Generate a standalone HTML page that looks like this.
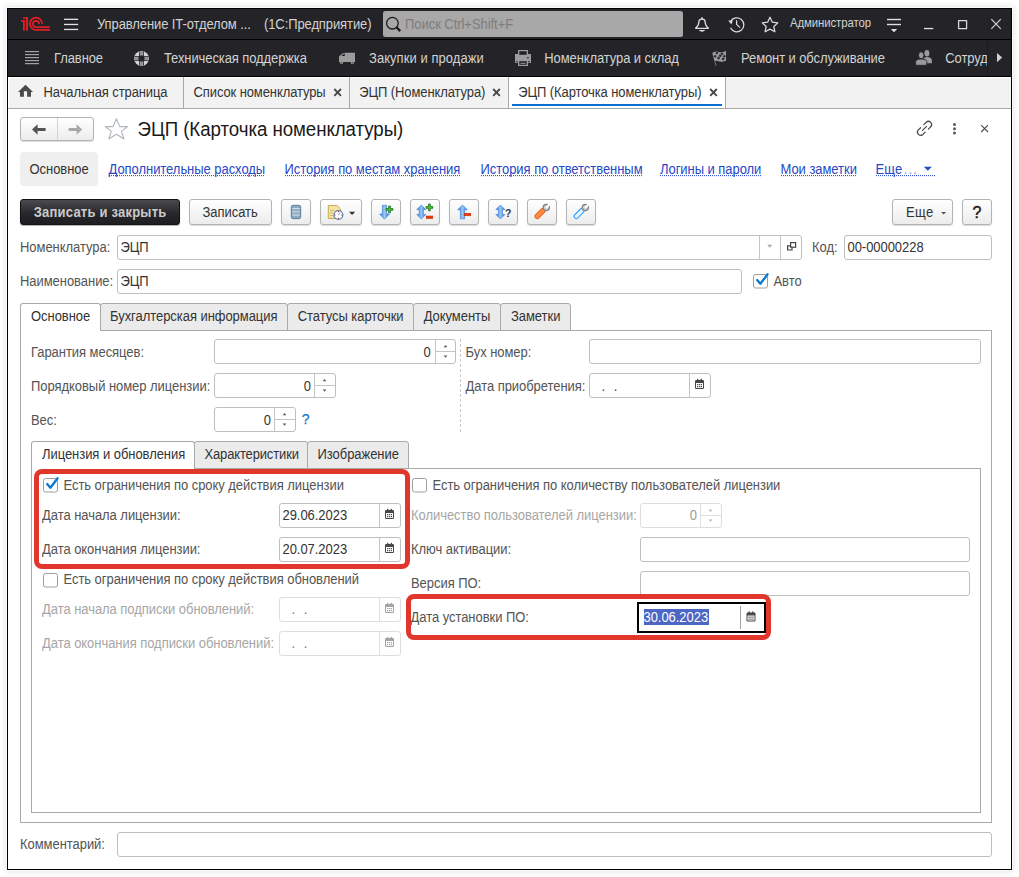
<!DOCTYPE html>
<html><head><meta charset="utf-8">
<style>
*{box-sizing:border-box;margin:0;padding:0}
html,body{width:1019px;height:877px;overflow:hidden;background:#fff}
body{position:relative;font-family:"Liberation Sans",sans-serif;font-size:13px;color:#333}
.a{position:absolute}
.t{position:absolute;white-space:nowrap;font-size:13px;line-height:15px;letter-spacing:-0.05px}
.wt,.tb{letter-spacing:-0.1px}
.t{transform:scaleY(1.07);transform-origin:0 12px}
svg{position:absolute;overflow:visible}
#win{position:absolute;left:7px;top:8px;width:1005px;height:862px;border:1px solid #000;background:#fff;box-shadow:0 0 0 1px #fafafa,0 0 6px 2px rgba(0,0,0,.10)}
#title{left:8px;top:9px;width:1003px;height:30px;background:#242428}
#sep1{left:8px;top:39px;width:1003px;height:1px;background:#000}
#sect{left:8px;top:40px;width:1003px;height:36px;background:#242428}
#sep2{left:8px;top:76px;width:1003px;height:1px;background:#000}
#tabs{left:8px;top:77px;width:1003px;height:31px;background:#f2f2f2;border-top:1px solid #fff;border-left:1px solid #fff}
#tabline{left:8px;top:108px;width:1003px;height:1px;background:#a8a8a8}
.wt{color:#d2d2d2}
.lnk{color:#2548c6;background-image:linear-gradient(to right,#2548c6 50%,transparent 50%);background-size:2px 1px;background-repeat:repeat-x;background-position:0 13px;padding-bottom:1px}
.inp{position:absolute;border:1px solid #bfbfbf;border-radius:3px;background:#fff}
.dis{border-color:#dedede}
.lbl{color:#545454}
.dl{color:#a6a6a6}
.btn{position:absolute;border:1px solid #b3b3b3;border-radius:3px;background:linear-gradient(#fff,#ececec);box-shadow:0 1px 1px rgba(0,0,0,.15)}
.vsep{position:absolute;width:1px;background:#c4c4c4}
.cb{position:absolute;width:15px;height:15px;border:1px solid #9a9a9a;border-radius:2px;background:#fff}
.red{position:absolute;border:5px solid #e0362c;border-radius:8px}
</style></head><body>
<div id="win"></div>
<div class="a" id="title"></div>
<div class="a" id="sep1"></div>
<div class="a" id="sect"></div>
<div class="a" id="sep2"></div>
<div class="a" id="tabs"></div>
<div class="a" id="tabline"></div>

<!-- TITLEBAR -->
<!-- 1C logo -->
<svg style="left:18px;top:14px" width="34" height="19" viewBox="18 14 34 19">
 <g fill="#e21d25">
  <rect x="21" y="20.2" width="3.8" height="1.6"/>
  <rect x="23" y="20.2" width="1.8" height="10.5"/>
  <rect x="23" y="17.2" width="4.8" height="1.6"/>
  <rect x="26.1" y="17.2" width="1.9" height="13.5"/>
 </g>
 <g fill="none" stroke="#e21d25" stroke-width="1.75">
  <path d="M50 29.85 H36 A6.1 6.1 0 1 1 42.1 23.75"/>
  <path d="M50 27 H36 A3.1 3.1 0 1 1 39.1 23.9"/>
 </g>
</svg>

<!-- hamburger -->
<svg style="left:0;top:0" width="1019" height="40" viewBox="0 0 1019 40">
 <g fill="#e4e4e4">
  <rect x="64" y="18.7" width="14.2" height="1.3"/>
  <rect x="64" y="23.8" width="14.2" height="1.3"/>
  <rect x="64" y="28.8" width="14.2" height="1.3"/>
 </g>
 <rect x="383" y="11" width="300" height="26" rx="2.5" fill="#a8a8a8"/>
 <g fill="none" stroke="#1c1c1c">
  <circle cx="392.4" cy="23.2" r="5.8" stroke-width="1.3"/>
  <path d="M396.6 27.4 L400.3 31.1" stroke-width="2.2"/>
 </g>
 <g fill="none" stroke="#dcdcdc" stroke-width="1.25" stroke-linejoin="round">
  <path d="M695.6 28.3 Q698.9 25.4 698.9 21.8 Q698.9 19.2 702 19.2 Q705.1 19.2 705.1 21.8 Q705.1 25.4 708.4 28.3 Z"/>
  
  <path d="M730.6 21.6 A7 7 0 1 1 730.5 27.8"/>
  <path d="M736.6 20.2 V24.4 L740 27.6"/>
  <polygon points="770.00,17.20 772.35,22.24 777.80,22.85 773.80,26.50 774.90,31.80 770.00,29.10 765.10,31.80 766.20,26.50 762.20,22.85 767.65,22.24"/>
  <rect x="958.6" y="20.6" width="8" height="8"/>
  <path d="M991.3 19.2 L1000.8 28.8 M1000.8 19.2 L991.3 28.8" stroke-width="1.1"/>
 </g>
 <polygon points="728.2,20.6 732.8,20.4 731.4,24.6" fill="#dcdcdc"/>
 <circle cx="702" cy="18.3" r="1" fill="#dcdcdc"/><path d="M698.6 30.1 H705.4 Q702 33.2 698.6 30.1 Z" fill="#dcdcdc"/>
 <g fill="#e0e0e0">
  <rect x="887" y="18.8" width="14" height="1.4"/>
  <rect x="887" y="23.8" width="14" height="1.4"/>
  <polygon points="890.8,29 897.2,29 894,32.2"/>
  <rect x="924" y="27.9" width="9.2" height="1.3"/>
 </g>
</svg>
<div class="t wt" style="left:97px;top:17px">Управление IT-отделом ...</div>
<div class="t wt" style="left:264px;top:17px">(1С:Предприятие)</div>
<div class="t" style="left:405px;top:17px;color:#7d7d7d">Поиск Ctrl+Shift+F</div>
<div class="t wt" style="left:790px;top:17.3px;font-size:11.4px;line-height:13px">Администратор</div>

<!-- SECTION BAR -->
<svg style="left:0;top:40px" width="1019" height="36" viewBox="0 40 1019 36">
 <g fill="#a3a3a3">
  <rect x="25" y="51" width="14" height="1.2"/>
  <rect x="25" y="54" width="14" height="1.2"/>
  <rect x="25" y="57" width="14" height="1.2"/>
  <rect x="25" y="60" width="14" height="1.2"/>
  <rect x="25" y="63" width="14" height="1.2"/>
 </g>
 <!-- lifebuoy -->
 <clipPath id="lb"><circle cx="141.5" cy="58.5" r="7.5"/></clipPath>
 <circle cx="141.5" cy="58.5" r="7.5" fill="#d4d4d4"/>
 <g fill="#969696" clip-path="url(#lb)">
  <rect x="140" y="50.5" width="3" height="4.8"/>
  <rect x="140" y="61.7" width="3" height="4.8"/>
  <rect x="133.5" y="57" width="4.8" height="3"/>
  <rect x="144.7" y="57" width="4.8" height="3"/>
 </g>
 <g fill="#242428" clip-path="url(#lb)">
  <rect x="139.2" y="50" width="0.8" height="17"/>
  <rect x="143" y="50" width="0.8" height="17"/>
  <rect x="133" y="56.2" width="17" height="0.8"/>
  <rect x="133" y="60" width="17" height="0.8"/>
  <circle cx="141.5" cy="58.5" r="3.2"/>
 </g>
 <!-- truck -->
 <g fill="#9c9c9c">
  <path d="M339 56.5 L342.6 53.2 H345 V52.8 H355 V62 H339 Z"/>
  <circle cx="341.5" cy="62.6" r="1.6"/>
  <circle cx="352.4" cy="62.6" r="1.6"/>
 </g>
 <path d="M341.4 56 L343.2 54.3 H344.8 V56 Z" fill="#242428"/><circle cx="341.5" cy="62.8" r="0.6" fill="#242428"/><circle cx="352.4" cy="62.8" r="0.6" fill="#242428"/>
 <!-- printer -->
 <g fill="#9c9c9c">
  <path d="M518 50 H528 V54 H531 V63 H528 V66 H518 V63 H515 V54 H518 Z"/>
 </g>
 <g fill="#242428">
  <rect x="519.3" y="51.2" width="7.4" height="3.6"/>
  <rect x="519.3" y="61.2" width="7.4" height="3.6"/>
  <rect x="527.2" y="57" width="1.4" height="1.4"/>
  <rect x="516.3" y="61" width="1.4" height="1.4"/>
  <rect x="528.3" y="61" width="1.4" height="1.4"/>
 </g>
 <rect x="520.5" y="62.8" width="5" height="1" fill="#9c9c9c"/>
 <!-- flag -->
 <path d="M712.3 53 Q714 51 717 51.6 Q721 53.2 726 51 V60.8 Q721.5 62.5 717.5 61 Q715.5 60.5 715 61.5 L716.6 65.6 L715.6 65.6 Z" fill="#9c9c9c"/>
 <g fill="#242428">
  <rect x="715.8" y="51.9" width="2.2" height="2.2" transform="rotate(35 716.9 53)"/>
  <rect x="720.9" y="52.7" width="2.2" height="2.2" transform="rotate(35 722 53.8)"/>
  <rect x="714.0" y="55.1" width="2.2" height="2.2" transform="rotate(35 715.1 56.2)"/>
  <rect x="719.1" y="54.7" width="2.2" height="2.2" transform="rotate(35 720.2 55.8)"/>
  <rect x="723.2" y="55.1" width="2.2" height="2.2" transform="rotate(35 724.3 56.2)"/>
  <rect x="717.5" y="57.0" width="2.2" height="2.2" transform="rotate(35 718.6 58.1)"/>
  <rect x="722.0" y="57.8" width="2.2" height="2.2" transform="rotate(35 723.1 58.9)"/>
 </g>
 <!-- people -->
 <g fill="#9a9a9a">
  <ellipse cx="926.9" cy="53.3" rx="2.5" ry="3.3"/>
  <path d="M923.5 63.3 V58.6 Q924.5 56.9 927 56.9 Q931.9 57.1 931.9 60.2 V63.3 Z"/>
 </g>
 <g fill="#9a9a9a" stroke="#242428" stroke-width="0.9">
  <ellipse cx="921.2" cy="55.3" rx="2.7" ry="3.5"/>
  <path d="M915.6 65.3 V61.6 Q916.2 59 921 59 Q926.4 59 926.8 61.6 V65.3 Z"/>
 </g>
 <rect x="987" y="40" width="1" height="36" fill="#1c1c20"/>
 <polygon points="997,53 1002.2,57.6 997,62.2" fill="#d0d0d0"/>
</svg>
<div class="t wt" style="left:54px;top:51px">Главное</div>
<div class="t wt" style="left:164px;top:51px">Техническая поддержка</div>
<div class="t wt" style="left:369px;top:51px;letter-spacing:0.05px">Закупки и продажи</div>
<div class="t wt" style="left:544.3px;top:51px">Номенклатура и склад</div>
<div class="t wt" style="left:741px;top:51px">Ремонт и обслуживание</div>
<div style="position:absolute;left:940px;top:51px;width:47px;height:16px;overflow:hidden"><div class="t wt" style="left:5.3px;top:0">Сотрудники</div></div>

<!-- TABS BAR -->
<svg style="left:0;top:77px" width="1019" height="32" viewBox="0 77 1019 32">
 <rect x="509" y="77" width="216" height="31" fill="#fff"/>
 <g fill="#a9a9a9">
  <rect x="183" y="77" width="1" height="31"/>
  <rect x="349" y="77" width="1" height="31"/>
  <rect x="508" y="77" width="1" height="31"/>
  <rect x="725" y="77" width="1" height="31"/>
 </g>
 <rect x="512" y="104" width="210" height="2" fill="#0a6fcf"/>
 <path d="M18 92 L25.5 84.8 L33 92 H31 V96.8 H27.1 V91.2 H23.9 V96.8 H20 V92 Z" fill="#4a4a4a"/>
 <g stroke="#4a4a4a" stroke-width="1.9" fill="none">
  <path d="M334.3 89 L341 95.8 M341 89 L334.3 95.8"/>
  <path d="M493.2 89 L499.8 95.8 M499.8 89 L493.2 95.8"/>
  <path d="M710.2 89 L716.8 95.8 M716.8 89 L710.2 95.8"/>
 </g>
</svg>
<div class="t tb" style="left:43.5px;top:84.5px;color:#333">Начальная страница</div>
<div class="t tb" style="left:193.5px;top:84.5px;color:#333">Список номенклатуры</div>
<div class="t tb" style="left:359.3px;top:84.5px;color:#333">ЭЦП (Номенклатура)</div>
<div class="t tb" style="left:518.3px;top:84.5px;color:#333">ЭЦП (Карточка номенклатуры)</div>

<!-- FORM HEADER -->
<div class="btn" style="left:20px;top:117px;width:74px;height:24px"></div>
<div class="a" style="left:57px;top:118px;width:1px;height:22px;background:#d4d4d4"></div>
<svg style="left:0;top:110px" width="1019" height="40" viewBox="0 110 1019 40">
 <path d="M32 129.5 L37.6 124.3 V127.9 H45.6 V131.1 H37.6 V134.8 Z" fill="#545454"/>
 <path d="M82.2 129.5 L76.6 124.3 V127.9 H68.6 V131.1 H76.6 V134.8 Z" fill="#a8a8a8"/>
 <polygon points="116.4,118.8 119.8,126.6 127.5,126.6 121.5,131.4 124,139 116.4,134.3 108.8,139 111.3,131.4 105.3,126.6 113,126.6" fill="none" stroke="#aeb5bd" stroke-width="1.1" stroke-linejoin="round"/>
 <g fill="none" stroke="#4a4a4a" stroke-width="1.2" stroke-linecap="round">
  <path d="M920.6 127.7 L918.34 129.94 A3.2 3.2 0 0 0 922.86 134.46 L925.1 132.2"/>
  <path d="M923.8 124.7 L926.24 122.24 A3.2 3.2 0 0 1 930.76 126.76 L928.4 129.1"/>
  <path d="M922.5 130.4 L926.6 126.3"/>
 </g>
 <g fill="#5a5a5a">
  <circle cx="954.5" cy="124.6" r="1.5"/>
  <circle cx="954.5" cy="128.8" r="1.5"/>
  <circle cx="954.5" cy="133" r="1.5"/>
 </g>
 <path d="M981.2 125.2 L988 132 M988 125.2 L981.2 132" stroke="#4a4a4a" stroke-width="1.1"/>
</svg>
<div class="t" style="left:137.5px;top:118.5px;font-size:18.7px;line-height:22px;color:#1a1a1a;letter-spacing:-0.05px;transform:scaleY(1.09);transform-origin:0 17.5px">ЭЦП (Карточка номенклатуры)</div>

<!-- LINK BAR -->
<div class="a" style="left:20px;top:152px;width:78px;height:34px;background:#efefef;border-radius:4px"></div>
<div class="t" style="left:29.5px;top:162px;color:#333">Основное</div>
<div class="t lnk" style="left:108.5px;top:162px">Дополнительные расходы</div>
<div class="t lnk" style="left:284.5px;top:162px">История по местам хранения</div>
<div class="t lnk" style="left:480.5px;top:162px">История по ответственным</div>
<div class="t lnk" style="left:660px;top:162px">Логины и пароли</div>
<div class="t lnk" style="left:780.5px;top:162px">Мои заметки</div>
<div class="t lnk" style="left:875.5px;top:162px;width:60px;letter-spacing:0.1px">Еще<span style="color:#7f95dc;letter-spacing:1.1px;margin-left:1.5px">...</span></div>
<svg style="left:920px;top:160px" width="20" height="20" viewBox="920 160 20 20"><polygon points="923.8,166.8 931.8,166.8 927.8,170.8" fill="#2548c6"/></svg>

<!-- TOOLBAR -->
<div class="a" style="left:20px;top:199px;width:160px;height:26px;border:1px solid #111;border-radius:3px;background:linear-gradient(#4a4a4f,#28282c 55%,#1e1e21);box-shadow:0 1px 1px rgba(0,0,0,.3)"></div>
<div class="t" style="left:33.7px;top:205px;font-weight:bold;color:#cacaca;letter-spacing:0.22px">Записать и закрыть</div>
<div class="btn" style="left:189px;top:199px;width:83px;height:26px"></div>
<div class="t" style="left:202.5px;top:205px;color:#333">Записать</div>
<div class="btn" style="left:281px;top:199px;width:30px;height:26px"></div>
<div class="btn" style="left:320px;top:199px;width:42px;height:26px"></div>
<div class="btn" style="left:371px;top:199px;width:30px;height:26px"></div>
<div class="btn" style="left:410px;top:199px;width:30px;height:26px"></div>
<div class="btn" style="left:449px;top:199px;width:30px;height:26px"></div>
<div class="btn" style="left:488px;top:199px;width:30px;height:26px"></div>
<div class="btn" style="left:527px;top:199px;width:30px;height:26px"></div>
<div class="btn" style="left:566px;top:199px;width:30px;height:26px"></div>
<div class="btn" style="left:892px;top:199px;width:61px;height:26px"></div>
<div class="t" style="left:906px;top:205px;color:#333;letter-spacing:0.4px">Еще</div>
<div class="btn" style="left:962px;top:199px;width:30px;height:26px"></div>
<svg style="left:960px;top:200px" width="40" height="25" viewBox="960 200 40 25"><text x="972.6" y="218.2" font-family="Liberation Sans" font-size="16" fill="#1a1a1a" stroke="#1a1a1a" stroke-width="0.45">?</text></svg>
<svg style="left:0;top:195px" width="1019" height="35" viewBox="0 195 1019 35">
 <defs>
  <linearGradient id="bl" x1="0" x2="1" y1="0" y2="0"><stop offset="0" stop-color="#2a6fd0"/><stop offset="0.5" stop-color="#9cc8f2"/><stop offset="1" stop-color="#2a6fd0"/></linearGradient>
 </defs>
 <!-- db -->
 <rect x="291.3" y="205.3" width="9.4" height="13.4" rx="1.8" fill="#8eaac0" stroke="#5f7e97" stroke-width="1"/>
 <g fill="#dfeaf3"><rect x="292.3" y="208.2" width="7.4" height="0.9"/><rect x="292.3" y="211.4" width="7.4" height="0.9"/><rect x="292.3" y="214.6" width="7.4" height="0.9"/></g>
 <!-- doc clock -->
 <path d="M328.3 205.5 H337 L340.6 209 V218.5 H328.3 Z" fill="#f3e3a0" stroke="#cdaa52" stroke-width="1"/>
 <g fill="#c9b479"><rect x="330" y="210" width="4" height="0.8"/><rect x="330" y="212.5" width="3" height="0.8"/><rect x="330" y="215" width="3" height="0.8"/></g>
 <circle cx="338.4" cy="215" r="4.4" fill="#fff" stroke="#5a86b8" stroke-width="1.3"/>
 <g fill="#e02020"><circle cx="338.4" cy="211.6" r="0.6"/><circle cx="338.4" cy="218.4" r="0.6"/><circle cx="335" cy="215" r="0.6"/><circle cx="341.8" cy="215" r="0.6"/></g>
 <path d="M338.4 215 L340 212.6" stroke="#5a86b8" stroke-width="0.8"/>
 <polygon points="349,211.8 355.2,211.8 352.1,215" fill="#333"/>
 <polygon points="941,212 946.2,212 943.6,214.6" fill="#555"/>
 <!-- down + -->
 <path d="M382.4 205.3 H386.6 V214 H389.4 L384.5 219.2 L379.6 214 H382.4 Z" fill="url(#bl)" stroke="#2f7ee0" stroke-width="0.6"/>
 <path d="M388.6 206 H390.4 V208.5 H392.9 V210.3 H390.4 V212.8 H388.6 V210.3 H386.1 V208.5 H388.6 Z" fill="#44cc2c" stroke="#1e6e1e" stroke-width="0.8"/>
 <!-- updown + - -->
 <path d="M421.3 205 L425.8 209.6 H423.4 V214.4 H425.8 L421.3 219 L416.8 214.4 H419.2 V209.6 H416.8 Z" fill="url(#bl)" stroke="#2f7ee0" stroke-width="0.6"/>
 <path d="M428.5 204 H430.3 V206.5 H432.8 V208.3 H430.3 V210.8 H428.5 V208.3 H426 V206.5 H428.5 Z" fill="#44cc2c" stroke="#1e6e1e" stroke-width="0.8"/>
 <rect x="426.2" y="216" width="6.6" height="2.6" fill="#e63c10" stroke="#c02000" stroke-width="0.5"/>
 <!-- up - -->
 <path d="M462.5 205 L467.3 209.8 H464.6 V218.8 H460.4 V209.8 H457.7 Z" fill="url(#bl)" stroke="#2f7ee0" stroke-width="0.6"/>
 <rect x="464.2" y="213.2" width="6.6" height="2.6" fill="#e63c10" stroke="#c02000" stroke-width="0.5"/>
 <!-- updown ? -->
 <path d="M500.4 205 L504.9 209.6 H502.5 V214.4 H504.9 L500.4 219 L495.9 214.4 H498.3 V209.6 H495.9 Z" fill="url(#bl)" stroke="#2f7ee0" stroke-width="0.6"/>
 <text x="505" y="216.6" font-family="Liberation Sans" font-weight="bold" font-size="10.5" fill="#333348">?</text>
 <!-- wrenches -->
 <path d="M537.3 216.3 L542.8 210.8" stroke="#e8661a" stroke-width="5.6" stroke-linecap="round"/>
 <path d="M537.3 216.3 L542.8 210.8" stroke="#ff8a48" stroke-width="3.6" stroke-linecap="round"/>
 <circle cx="546.3" cy="207.6" r="3.1" fill="#d4d4d4" stroke="#858585" stroke-width="1.3"/>
 <path d="M546.6 207.3 L550 204" stroke="#fff" stroke-width="2.2"/>
 <circle cx="546.6" cy="207.3" r="1" fill="#fff"/>
 <path d="M576.3 216.3 L581.8 210.8" stroke="#3aa6ff" stroke-width="5.6" stroke-linecap="round"/>
 <path d="M576.3 216.3 L581.8 210.8" stroke="#e8f4ff" stroke-width="3.2" stroke-linecap="round"/>
 <circle cx="585.3" cy="207.6" r="3.1" fill="#d4d4d4" stroke="#858585" stroke-width="1.3"/>
 <path d="M585.6 207.3 L589 204" stroke="#fff" stroke-width="2.2"/>
 <circle cx="585.6" cy="207.3" r="1" fill="#fff"/>
</svg>

<!-- FIELDS -->
<div class="t lbl" style="left:20px;top:240px">Номенклатура:</div>
<div class="inp" style="left:117px;top:235px;width:685px;height:25px"></div>
<div class="vsep" style="left:759px;top:236px;height:23px"></div>
<div class="vsep" style="left:780px;top:236px;height:23px"></div>
<div class="t" style="left:120.5px;top:240px;color:#333">ЭЦП</div>
<div class="t lbl" style="left:812px;top:240px">Код:</div>
<div class="inp" style="left:844px;top:235px;width:148px;height:25px"></div>
<div class="t" style="left:847.5px;top:240px;color:#333">00-00000228</div>
<div class="t lbl" style="left:20px;top:274px">Наименование:</div>
<div class="inp" style="left:117px;top:269px;width:625px;height:25px"></div>
<div class="t" style="left:120.5px;top:274px;color:#333">ЭЦП</div>
<div class="t lbl" style="left:773.5px;top:274px">Авто</div>

<!-- MAIN TABS -->
<div class="a" style="left:20px;top:330px;width:972px;height:493px;border:1px solid #a9a9a9"></div>
<div class="a" style="left:100px;top:303px;width:188px;height:28px;border:1px solid #a9a9a9;border-radius:3px 3px 0 0;background:#ebebeb"></div>
<div class="a" style="left:287px;top:303px;width:127px;height:28px;border:1px solid #a9a9a9;border-radius:3px 3px 0 0;background:#ebebeb"></div>
<div class="a" style="left:413px;top:303px;width:88px;height:28px;border:1px solid #a9a9a9;border-radius:3px 3px 0 0;background:#ebebeb"></div>
<div class="a" style="left:500px;top:303px;width:71px;height:28px;border:1px solid #a9a9a9;border-radius:3px 3px 0 0;background:#ebebeb"></div>
<div class="a" style="left:20px;top:303px;width:81px;height:28px;border:1px solid #a9a9a9;border-bottom:none;border-radius:3px 3px 0 0;background:#fff"></div>
<div class="t" style="left:31px;top:309px;color:#333">Основное</div>
<div class="t" style="left:110px;top:309px;color:#333">Бухгалтерская информация</div>
<div class="t" style="left:297.7px;top:309px;color:#333">Статусы карточки</div>
<div class="t" style="left:423.7px;top:309px;color:#333">Документы</div>
<div class="t" style="left:511px;top:309px;color:#333">Заметки</div>

<div class="t lbl" style="left:31px;top:345px">Гарантия месяцев:</div>
<div class="inp" style="left:214px;top:339px;width:242px;height:25px"></div>
<div class="vsep" style="left:435px;top:340px;height:23px"></div>
<div class="a" style="left:436px;top:351px;width:19px;height:1px;background:#c4c4c4"></div>
<div class="t" style="left:423.5px;top:345px;color:#333">0</div>
<div class="t lbl" style="left:31px;top:379px">Порядковый номер лицензии:</div>
<div class="inp" style="left:214px;top:373px;width:122px;height:25px"></div>
<div class="vsep" style="left:314px;top:374px;height:23px"></div>
<div class="a" style="left:315px;top:385px;width:20px;height:1px;background:#c4c4c4"></div>
<div class="t" style="left:303.7px;top:379px;color:#333">0</div>
<div class="t lbl" style="left:31px;top:413px">Вес:</div>
<div class="inp" style="left:214px;top:407px;width:82px;height:25px"></div>
<div class="vsep" style="left:274px;top:408px;height:23px"></div>
<div class="a" style="left:275px;top:419px;width:20px;height:1px;background:#c4c4c4"></div>
<div class="t" style="left:263.8px;top:413px;color:#333">0</div>

<div class="t lbl" style="left:465.5px;top:345px">Бух номер:</div>
<div class="inp" style="left:589px;top:339px;width:392px;height:25px"></div>
<div class="t lbl" style="left:465.5px;top:379px">Дата приобретения:</div>
<div class="inp" style="left:589px;top:373px;width:122px;height:25px"></div>
<div class="vsep" style="left:689px;top:374px;height:23px"></div>
<div class="t" style="left:601.5px;top:379px;color:#444">.</div><div class="t" style="left:613.8px;top:379px;color:#444">.</div>

<!-- INNER TABS -->
<div class="a" style="left:31px;top:468px;width:950px;height:345px;border:1px solid #a9a9a9"></div>
<div class="a" style="left:194px;top:441px;width:114px;height:28px;border:1px solid #a9a9a9;border-radius:3px 3px 0 0;background:#ebebeb"></div>
<div class="a" style="left:307px;top:441px;width:102px;height:28px;border:1px solid #a9a9a9;border-radius:3px 3px 0 0;background:#ebebeb"></div>
<div class="a" style="left:31px;top:441px;width:164px;height:28px;border:1px solid #a9a9a9;border-bottom:none;border-radius:3px 3px 0 0;background:#fff"></div>
<div class="t" style="left:42px;top:447px;color:#333">Лицензия и обновления</div>
<div class="t" style="left:204.5px;top:447px;color:#333;letter-spacing:-0.15px">Характеристики</div>
<div class="t" style="left:317.5px;top:447px;color:#333">Изображение</div>

<div class="t lbl" style="left:63.5px;top:478px">Есть ограничения по сроку действия лицензии</div>
<div class="t lbl" style="left:42px;top:508px">Дата начала лицензии:</div>
<div class="inp" style="left:279px;top:503px;width:122px;height:25px"></div>
<div class="vsep" style="left:379px;top:504px;height:23px"></div>
<div class="t" style="left:282.5px;top:508px;color:#333">29.06.2023</div>
<div class="t lbl" style="left:42px;top:542px">Дата окончания лицензии:</div>
<div class="inp" style="left:279px;top:537px;width:122px;height:25px"></div>
<div class="vsep" style="left:379px;top:538px;height:23px"></div>
<div class="t" style="left:282.5px;top:542px;color:#333">20.07.2023</div>
<div class="t lbl" style="left:63.5px;top:572px">Есть ограничения по сроку действия обновлений</div>
<div class="t dl" style="left:42px;top:602px">Дата начала подписки обновлений:</div>
<div class="inp dis" style="left:279px;top:597px;width:122px;height:25px"></div>
<div class="vsep" style="left:379px;top:598px;height:23px;background:#dedede"></div>
<div class="t" style="left:291.5px;top:602px;color:#777">.</div><div class="t" style="left:303.8px;top:602px;color:#777">.</div>
<div class="t dl" style="left:42px;top:636px">Дата окончания подписки обновлений:</div>
<div class="inp dis" style="left:279px;top:631px;width:122px;height:25px"></div>
<div class="vsep" style="left:379px;top:632px;height:23px;background:#dedede"></div>
<div class="t" style="left:291.5px;top:636px;color:#777">.</div><div class="t" style="left:303.8px;top:636px;color:#777">.</div>

<div class="t lbl" style="left:432.5px;top:478px">Есть ограничения по количеству пользователей лицензии</div>
<div class="t dl" style="left:411px;top:508px">Количество пользователей лицензии:</div>
<div class="inp dis" style="left:640px;top:503px;width:82px;height:25px"></div>
<div class="vsep" style="left:700px;top:504px;height:23px;background:#dedede"></div>
<div class="a" style="left:701px;top:515px;width:20px;height:1px;background:#dedede"></div>
<div class="t" style="left:689.7px;top:508px;color:#999">0</div>
<div class="t lbl" style="left:411px;top:542px">Ключ активации:</div>
<div class="inp" style="left:640px;top:537px;width:330px;height:25px"></div>
<div class="t lbl" style="left:411px;top:576px">Версия ПО:</div>
<div class="inp" style="left:640px;top:571px;width:330px;height:25px"></div>
<div class="t lbl" style="left:410.5px;top:610px">Дата установки ПО:</div>
<div class="a" style="left:637px;top:602px;width:129px;height:31px;border:2px solid #000;background:#fff"></div>
<div class="a" style="left:740px;top:606px;width:1px;height:23px;background:#a0a0a0"></div>
<div class="a" style="left:644px;top:609px;width:65px;height:16px;background:#4d65c3"></div>
<div class="t" style="left:643.5px;top:610px;color:#fff">30.06.2023</div>

<div class="red" style="left:33.5px;top:469px;width:376.5px;height:99.5px"></div>
<div class="red" style="left:405.5px;top:594.2px;width:365.5px;height:45.5px"></div>

<div class="t lbl" style="left:20px;top:837px">Комментарий:</div>
<div class="inp" style="left:117px;top:832px;width:875px;height:25px"></div>

<svg style="left:0;top:0" width="1019" height="877" viewBox="0 0 1019 877">
<polygon points="767.2,244.8 772.2,244.8 769.7,247.8" fill="#a8a8a8"/>
<g fill="none" stroke="#444" stroke-width="1.2"><path d="M790.5 245.8 H787.6 V250 H792 V247.2"/><rect x="790.6" y="242.6" width="5" height="4.6"/></g>
<rect x="753.5" y="274.5" width="14" height="13.5" rx="2" fill="#fff" stroke="#9e9e9e" stroke-width="1"/><path d="M757.2 280 L760.4 283.7 L767.6 274.3" fill="none" stroke="#0a78d4" stroke-width="2.3" stroke-linecap="round" stroke-linejoin="round"/>
<polygon points="443.7,347.3 447.3,347.3 445.5,345.1" fill="#555"/><polygon points="443.7,355.5 447.3,355.5 445.5,357.7" fill="#555"/>
<polygon points="322.7,381.3 326.3,381.3 324.5,379.1" fill="#555"/><polygon points="322.7,389.5 326.3,389.5 324.5,391.7" fill="#555"/>
<polygon points="282.7,415.3 286.3,415.3 284.5,413.1" fill="#555"/><polygon points="282.7,423.5 286.3,423.5 284.5,425.7" fill="#555"/>
<text x="301.8" y="423.8" font-family="Liberation Sans" font-size="14" fill="#1a73c8" stroke="#1a73c8" stroke-width="0.25">?</text>
<path d="M460.5 339 V432" stroke="#c8c8c8" stroke-width="1" stroke-dasharray="3 2"/>
<g fill="#474747"><rect x="695" y="380" width="9" height="9" rx="1.2"/><rect x="697" y="378.8" width="1.4" height="2" rx=".6"/><rect x="700.6" y="378.8" width="1.4" height="2" rx=".6"/></g>
<rect x="696" y="383" width="7" height="5" fill="#fff"/><g fill="#474747"><rect x="697" y="384" width="1.2" height="1.2"/><rect x="698.9" y="384" width="1.2" height="1.2"/><rect x="700.8" y="384" width="1.2" height="1.2"/><rect x="697" y="386" width="1.2" height="1.2"/><rect x="698.9" y="386" width="1.2" height="1.2"/><rect x="700.8" y="386" width="1.2" height="1.2"/></g>
<rect x="43.5" y="478.5" width="14" height="13.5" rx="2" fill="#fff" stroke="#9e9e9e" stroke-width="1"/><path d="M47.2 484 L50.4 487.7 L57.6 478.3" fill="none" stroke="#0a78d4" stroke-width="2.3" stroke-linecap="round" stroke-linejoin="round"/>
<rect x="43.5" y="573.5" width="14" height="13.5" rx="2" fill="#fff" stroke="#9e9e9e" stroke-width="1"/>
<rect x="412.5" y="478.5" width="14" height="13.5" rx="2" fill="#fff" stroke="#9e9e9e" stroke-width="1"/>
<g fill="#474747"><rect x="385" y="510" width="9" height="9" rx="1.2"/><rect x="387" y="508.8" width="1.4" height="2" rx=".6"/><rect x="390.6" y="508.8" width="1.4" height="2" rx=".6"/></g>
<rect x="386" y="513" width="7" height="5" fill="#fff"/><g fill="#474747"><rect x="387" y="514" width="1.2" height="1.2"/><rect x="388.9" y="514" width="1.2" height="1.2"/><rect x="390.8" y="514" width="1.2" height="1.2"/><rect x="387" y="516" width="1.2" height="1.2"/><rect x="388.9" y="516" width="1.2" height="1.2"/><rect x="390.8" y="516" width="1.2" height="1.2"/></g>
<g fill="#474747"><rect x="385" y="544" width="9" height="9" rx="1.2"/><rect x="387" y="542.8" width="1.4" height="2" rx=".6"/><rect x="390.6" y="542.8" width="1.4" height="2" rx=".6"/></g>
<rect x="386" y="547" width="7" height="5" fill="#fff"/><g fill="#474747"><rect x="387" y="548" width="1.2" height="1.2"/><rect x="388.9" y="548" width="1.2" height="1.2"/><rect x="390.8" y="548" width="1.2" height="1.2"/><rect x="387" y="550" width="1.2" height="1.2"/><rect x="388.9" y="550" width="1.2" height="1.2"/><rect x="390.8" y="550" width="1.2" height="1.2"/></g>
<g fill="#a3a3a3"><rect x="385" y="604" width="9" height="9" rx="1.2"/><rect x="387" y="602.8" width="1.4" height="2" rx=".6"/><rect x="390.6" y="602.8" width="1.4" height="2" rx=".6"/></g>
<rect x="386" y="607" width="7" height="5" fill="#fff"/><g fill="#a3a3a3"><rect x="387" y="608" width="1.2" height="1.2"/><rect x="388.9" y="608" width="1.2" height="1.2"/><rect x="390.8" y="608" width="1.2" height="1.2"/><rect x="387" y="610" width="1.2" height="1.2"/><rect x="388.9" y="610" width="1.2" height="1.2"/><rect x="390.8" y="610" width="1.2" height="1.2"/></g>
<g fill="#a3a3a3"><rect x="385" y="638" width="9" height="9" rx="1.2"/><rect x="387" y="636.8" width="1.4" height="2" rx=".6"/><rect x="390.6" y="636.8" width="1.4" height="2" rx=".6"/></g>
<rect x="386" y="641" width="7" height="5" fill="#fff"/><g fill="#a3a3a3"><rect x="387" y="642" width="1.2" height="1.2"/><rect x="388.9" y="642" width="1.2" height="1.2"/><rect x="390.8" y="642" width="1.2" height="1.2"/><rect x="387" y="644" width="1.2" height="1.2"/><rect x="388.9" y="644" width="1.2" height="1.2"/><rect x="390.8" y="644" width="1.2" height="1.2"/></g>
<polygon points="708.7,511.3 712.3,511.3 710.5,509.1" fill="#b0b0b0"/><polygon points="708.7,519.5 712.3,519.5 710.5,521.7" fill="#b0b0b0"/>
<g fill="#474747"><rect x="746.5" y="612.5" width="9" height="9" rx="1.2"/><rect x="748.5" y="611.3" width="1.4" height="2" rx=".6"/><rect x="752.1" y="611.3" width="1.4" height="2" rx=".6"/></g>
<rect x="747.5" y="615.5" width="7" height="5" fill="#fff"/><g fill="#474747"><rect x="748.5" y="616.5" width="1.2" height="1.2"/><rect x="750.4" y="616.5" width="1.2" height="1.2"/><rect x="752.3" y="616.5" width="1.2" height="1.2"/><rect x="748.5" y="618.5" width="1.2" height="1.2"/><rect x="750.4" y="618.5" width="1.2" height="1.2"/><rect x="752.3" y="618.5" width="1.2" height="1.2"/></g>
</svg>
</body></html>
